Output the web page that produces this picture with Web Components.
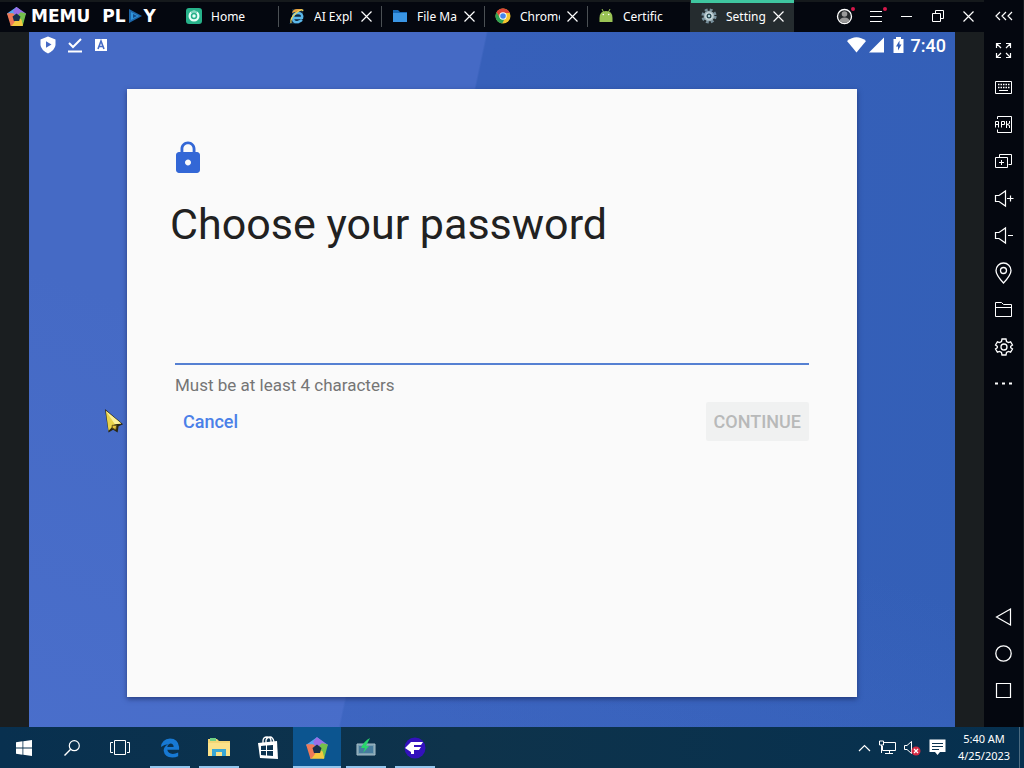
<!DOCTYPE html>
<html lang="en">
<head>
<meta charset="utf-8">
<meta name="viewport" content="width=device-width, initial-scale=1">
<title>MEmu Play</title>
<style>
  body {
    margin: 0;
    min-height: 100vh;
    display: flex;
    flex-direction: column;
    background: #1a1e20;
    font-family: Roboto, "Noto Sans", sans-serif;
    overflow: hidden;
  }
  .emulator {
    flex: 1;
    display: flex;
  }
  .window {
    flex: 1;
    min-width: 0;
    display: flex;
    flex-direction: column;
  }
  android-screen {
    flex: 1;
    margin: 0 29px;
  }
</style>
</head>
<body>
  <div class="emulator">
    <div class="window">
      <title-bar>
        <app-tab icon="home">Home</app-tab>
        <app-tab icon="ie" closable>AI Expl</app-tab>
        <app-tab icon="folder" closable>File Man</app-tab>
        <app-tab icon="chrome" closable>Chrome</app-tab>
        <app-tab icon="android">Certific</app-tab>
        <app-tab icon="cog" closable active>Settings</app-tab>
      </title-bar>
      <android-screen>
        <password-card></password-card>
      </android-screen>
    </div>
    <side-rail></side-rail>
  </div>
  <task-bar></task-bar>
  <mouse-cursor></mouse-cursor>

<script>
const LINE = 'fill="none" stroke="#fff"';

// name: [width, height, markup]
const ICONS = {
  memu: [24, 24, `
    <g stroke-width="1.5" stroke-linejoin="round">
      <path d="M12 2 2 9 6 12 12 13 17 6Z" fill="#58a5f0" stroke="#58a5f0"/>
      <path d="M12 2 22 9 18 13 12 13 9 6Z" fill="#9a6fe8" stroke="#9a6fe8"/>
      <path d="M22 9 18.5 22 13 19 12 13 17 8Z" fill="#74c04c" stroke="#74c04c"/>
      <path d="M18.5 22H6L8 16 12 13 17 16Z" fill="#f3c940" stroke="#f3c940"/>
      <path d="M6 22 2 9 8 9 12 13 9 18Z" fill="#ee7a58" stroke="#ee7a58"/>
    </g>
    <path d="M12 8.500 16.500 12 15 17H9L7.500 12Z" fill="#16304c"/>`],
  play: [14, 14, `<path d="M1 0 14 7 1 14Z" fill="#1d66a8"/><path d="M3 3 11 7 3 11Z" fill="#2f95dc"/><path d="M5 5 9 7 5 9Z" fill="#154a86"/>`],
  home: [16, 16, `<rect width="16" height="16" rx="3" fill="#27b28a"/><circle cx="8" cy="8" r="5.5" fill="#e9fff8"/><circle cx="8" cy="8" r="2.5" fill="none" stroke="#27b28a" stroke-width="1.5"/><path d="M5 4H11" stroke="#27b28a"/>`],
  ie: [16, 16, `<path d="M3 1H15L12 13 10 16H0L3 12Z" fill="#12283a"/><path d="M3 5Q4 1 8 1H14Q11 4 6 4Z" fill="#e9a33f"/><path d="M5 10H13Q14 5 9 5 4 5 4 10 4 15 9 14 12 13 13 12" fill="none" stroke="#5bb8ea" stroke-width="2.4"/><path d="M2 15Q1 10 7 5T14 3" fill="none" stroke="#f0d45a" stroke-width="1.3"/>`],
  folder: [16, 16, `<path d="M1 2H6L8 4H15V14H1Z" fill="#1668b5"/><path d="M1 5H15V14H1Z" fill="#3a95e4"/>`],
  chrome: [16, 16, `<circle cx="8" cy="8" r="7.5" fill="#f4c430"/><path d="M1.5 4.2A7.5 7.5 0 0 1 14.9 5H8L5 9.5Z" fill="#dc4437"/><path d="M1.5 4.2 5 9.8 9.5 11 7.2 15.5A7.5 7.5 0 0 1 1.5 4.2Z" fill="#2ea255"/><circle cx="8" cy="8" r="3.7" fill="#fff"/><circle cx="8" cy="8" r="2.8" fill="#4384ee"/>`],
  android: [16, 16, `<path d="M1.5 14V10Q1.5 3 8 3T14.5 10V14Z" fill="#9ac355"/><path d="M4 1 5.5 4M12 1 10.5 4" stroke="#9ac355"/><circle cx="5.3" cy="6.5" r=".8" fill="#fff"/><circle cx="10.7" cy="6.5" r=".8" fill="#fff"/>`],
  cog: [16, 16, `<circle cx="8" cy="8" r="6.3" fill="none" stroke="#78909c" stroke-width="2.6" stroke-dasharray="2.8 2.15"/><circle cx="8" cy="8" r="4.6" fill="#cfdde0" stroke="#a0b4bc" stroke-width="1.5"/><circle cx="8" cy="8" r="2.5" fill="#25434e"/><circle cx="8" cy="8" r="1.2" fill="#b3d8dc"/>`],
  close: [11, 11, `<path d="M.5.5 10.5 10.5M10.5.5.5 10.5" ${LINE} stroke-width="1.2"/>`],
  user: [20, 20, `<circle cx="9.5" cy="10.5" r="7" fill="#26292c" stroke="#fff" stroke-width="1.3"/><circle cx="9.5" cy="8" r="2.8" fill="#9a9a9a"/><path d="M4.5 15Q5 11.5 9.5 11.5T14.5 15Q9.5 18.5 4.5 15Z" fill="#9a9a9a"/><circle cx="18" cy="3" r="2" fill="#d5174a"/>`],
  menu: [20, 20, `<path d="M4 5.5H16M4 10.5H16M4 15.5H16" ${LINE}/><circle cx="19" cy="3" r="2" fill="#d5174a"/>`],
  minimize: [12, 12, `<path d="M0 6.5H11" ${LINE}/>`],
  restore: [12, 12, `<path d="M3.5 3V.5H11.5V8.5H9M.5 3.5H8.5V11.5H.5Z" ${LINE}/>`],
  collapse: [18, 10, `<path d="M5 1 1 5 5 9M11 1 7 5 11 9M17 1 13 5 17 9" ${LINE} stroke-width="1.2"/>`],
  expand: [17, 17, `<path d="M1.5 6V1.5H6M1.5 1.5 6 6M11 1.5H15.5V6M15.5 1.5 11 6M1.5 11V15.5H6M1.5 15.5 6 11M15.5 11V15.5H11M15.5 15.5 11 11" ${LINE} stroke-width="1.2"/>`],
  keyboard: [17, 13, `<path d="M.5.5H16.5V12.5H.5Z" ${LINE}/><path d="M3 3.5H14.5M3 6.5H14.5" ${LINE} stroke-width="1.5" stroke-dasharray="1.5 1"/><path d="M4 9.5H13" ${LINE}/>`],
  apk: [17, 17, `<path d="M2.5 3V.5H16.5V16.5H2.5V13.5M.5 11.5V5.5H3.5V11.5M.5 8.5H3.5M6.5 11.5V5.5H9.5V8.5H6.5M11.5 5V12M14.5 5V7.5L12 8.5 14.5 9.5V12" ${LINE}/>`],
  copies: [17, 15, `<path d="M4.5 3V.5H16.5V10.5H13.5M.5 3.5H12.5V13.5H.5ZM6.5 6V11M4 8.5H9" ${LINE}/>`],
  volumeUp: [18, 17, `<path d="M.5 5.5H4L10.5 1V16L4 11.5H.5ZM12 8.5H18.5M15.5 5.5V11.5" ${LINE} stroke-width="1.2"/>`],
  volumeDown: [18, 17, `<path d="M.5 5.5H4L10.5 1V16L4 11.5H.5ZM13 8.5H18" ${LINE} stroke-width="1.2"/>`],
  pin: [17, 22, `<path d="M8.5 21Q1 13 1 8.5A7.5 7.5 0 0 1 16 8.5Q16 13 8.5 21Z" ${LINE} stroke-width="1.3"/><circle cx="8.5" cy="8.5" r="3" ${LINE} stroke-width="1.3"/>`],
  files: [17, 15, `<path d="M.5 14.5V.5H6.5L8.5 2.5H16.5V14.5ZM.5 5.5H16.5" ${LINE}/>`],
  settings: [18, 18, `<path d="M7 1H11L11.5 3.5 13.5 4.6 15.6 3.8 17.5 7 15.7 8.3V9.7L17.5 11 15.6 14.2 13.5 13.4 11.5 14.5 11 17H7L6.5 14.5 4.5 13.4 2.4 14.2.5 11 2.3 9.7V8.3L.5 7 2.4 3.8 4.5 4.6 6.5 3.5Z" ${LINE} stroke-width="1.3"/><circle cx="9" cy="9" r="3" ${LINE} stroke-width="1.3"/>`],
  more: [17, 3, `<path d="M0 .5H3V2.5H0ZM7 .5H10V2.5H7ZM14 .5H17V2.5H14Z" fill="#fff"/>`],
  back: [17, 18, `<path d="M15.5 1V17L1.500 9Z" ${LINE} stroke-width="1.2"/>`],
  circle: [17, 17, `<circle cx="8.5" cy="8.5" r="7.7" ${LINE} stroke-width="1.3"/>`],
  square: [15, 15, `<path d="M.5.5H14.5V14.5H.5Z" ${LINE} stroke-width="1.2"/>`],
  shield: [16, 18, `<path d="M8 .5 15.5 3.5V9Q15 14 8 17.5 1 14 .5 9V3.5Z" fill="#fff"/><path d="M6 5.2 11.5 8.5 6 11.8Z" fill="#456ac5"/>`],
  done: [16, 18, `<path d="M2 7 6 11 14 3" ${LINE} stroke-width="2"/><path d="M1 15.5H15" ${LINE} stroke-width="2"/>`],
  letter: [14, 18, `<path d="M1 3H13V15H1Z" fill="#fff"/><path d="M4 13 7 5 10 13M5 10.5H9" fill="none" stroke="#456ac5" stroke-width="1.6"/>`],
  wifi: [19, 16, `<path d="M0 4Q9.5-3.5 19 4L9.5 15.5Z" fill="#fff"/>`],
  signal: [16, 16, `<path d="M0 15.5 15 .5V15.5Z" fill="#fff"/>`],
  battery: [11, 16, `<path d="M3 0H8V2H10.5V16H.5V2H3Z" fill="#fff"/><path d="M6.5 3.5 3 9.5H5V13.5L8.5 7.5H6.5Z" fill="#335fb7"/>`],
  lock: [24, 24, `<path d="M18 8h-1V6c0-2.760-2.240-5-5-5S7 3.240 7 6v2H6c-1.100 0-2 .9-2 2v10c0 1.100.9 2 2 2h12c1.100 0 2-.9 2-2V10c0-1.100-.9-2-2-2zm-6 9c-1.100 0-2-.9-2-2s.9-2 2-2 2 .9 2 2-.9 2-2 2zm3.100-9H8.900V6c0-1.710 1.390-3.100 3.100-3.100s3.100 1.390 3.100 3.100v2z" fill="#3367d6"/>`],
  windows: [16, 16, `<path d="M0 2.2 6.5 1.3V7.6H0ZM7.3 1.2 16 0V7.6H7.3ZM0 8.4H6.5V14.7L0 13.8ZM7.3 8.4H16V16L7.3 14.8Z" fill="#fff"/>`],
  search: [16, 16, `<circle cx="10.3" cy="5.7" r="5" ${LINE} stroke-width="1.2"/><path d="M6.7 9.3.5 15.5" ${LINE} stroke-width="1.4"/>`],
  taskView: [20, 15, `<path d="M4.5.5H15.5V14.5H4.5ZM3 2.5H.5V12.5H3M17 2.5H19.5V12.5H17" ${LINE}/>`],
  edge: [22, 22, `<path d="M1 10Q2 1 11 .5 20 .5 21 10V13H8Q9 17.5 14 17.5 17 17.5 20 16V20Q17 21.5 13.5 21.5 5 21 4 14 4 9.5 9 7 5 7 1 10ZM8 10H15Q15 6 11.5 6 8.5 6.5 8 10Z" fill="#1779d4"/>`],
  explorer: [22, 19, `<path d="M0 1H9L11 3H22V18H0Z" fill="#f3d675"/><path d="M2 0H8V3H2Z" fill="#6fcf85"/><path d="M0 5H22V18H0Z" fill="#fbe28a"/><path d="M4 18V11H18V18H14V14H8V18Z" fill="#38a7d5"/>`],
  store: [22, 24, `<path d="M6 7V5Q6 1 10 1T14 5V7M9 7V4Q10 1 13 1T17 6" ${LINE} stroke-width="1.3"/><path d="M1 7 20 5 21 23 3 22Z" fill="#fff"/><path d="M4 10 9 9.5V14H4ZM10 9.4 16 9V14H10ZM4 15H9V19.5L4 19ZM10 15H16V20L10 19.5Z" fill="#0b3350"/>`],
  monitor: [20, 20, `<path d="M1 6H19V17H1Z" fill="#789eb0" stroke="#a8bec8"/><path d="M3 8H17V15H3Z" fill="#477c9e"/><path d="M14 0Q8 3 5 10H9L7 15 13 8H10Z" fill="#28d66c"/>`],
  purple: [22, 22, `<circle cx="11" cy="11" r="10.5" fill="#3311bd"/><path d="M1 11 7 5H19L17 8H10V10H17L15 13H10V17H7V15Z" fill="#fff"/>`],
  chevron: [13, 8, `<path d="M1 7 6.5 1.5 12 7" ${LINE} stroke-width="1.2"/>`],
  network: [17, 15, `<path d="M4 2.5H16.5V10.5H3.5V6M10.5 10V13.5M6 13.5H14M.5 1H4.5V5H.5ZM2.5 5V13" ${LINE}/>`],
  muted: [17, 16, `<path d="M.5 5.5H3L7.5 1.5V13.5L3 9.5H.5Z" ${LINE}/><circle cx="12" cy="11" r="4.5" fill="#d42a43"/><path d="M10 9 14 13M14 9 10 13" ${LINE} stroke-width="1.2"/>`],
  message: [17, 17, `<path d="M.5.5H16.5V13H11L8.5 16 6 13H.5Z" fill="#fff"/><path d="M3 4.5H14M3 7.5H14M3 10.5H10" stroke="#0b3350"/>`],
  cursor: [22, 30, `<path d="M1 1 21 18 16 20 15 27 10 24 5 27Z" fill="#2a2713"/><path d="M2 3 19 17 12 18 5 25Z" fill="#e9d34b"/><path d="M2 3 12 18 19 17Z" fill="#fbf19a"/><path d="M9 19 14 19 13 24 9 22Z" fill="#e7c63d" stroke="#574815"/>`]
};

class UiIcon extends HTMLElement {
  constructor() {
    super();
    this.attachShadow({ mode: "open" });
  }

  connectedCallback() {
    const [w, h, markup] = ICONS[this.getAttribute("name")];
    const width = this.getAttribute("width") || w;
    const height = width * h / w;
    this.shadowRoot.innerHTML = `
      <style>
        :host { display: block; flex: none; }
        svg { display: block; overflow: visible; }
      </style>
      <svg width="${width}" height="${height}" viewBox="0 0 ${w} ${h}" aria-hidden="true">${markup}</svg>
    `;
  }
}

class AppTab extends HTMLElement {
  constructor() {
    super();
    this.attachShadow({ mode: "open" });
  }

  connectedCallback() {
    this.shadowRoot.innerHTML = `
      <style>
        :host {
          box-sizing: border-box;
          width: 103px;
          height: 32px;
          display: flex;
          align-items: center;
          padding-left: 10px;
          background: linear-gradient(#4b5054, #4b5054) right 6px / 1px 21px no-repeat;
        }
        :host([active]) {
          background: #252c2f;
          box-shadow: inset 0 3px #3fc6a0, -1px 0 #252c2f;
        }
        button {
          border: 0;
          padding: 0;
          background: none;
          color: #fff;
          font: 12px/18px "Noto Sans", sans-serif;
        }
        .tab {
          display: flex;
          align-items: center;
          gap: 9px;
          text-align: left;
        }
        .label {
          width: 40px;
          padding-top: 2px;
          overflow: hidden;
          white-space: nowrap;
        }
        .close { margin-left: 7px; }
      </style>
      <button class="tab">
        <ui-icon name="${this.getAttribute("icon")}"></ui-icon>
        <span class="label"><slot></slot></span>
      </button>
      ${this.hasAttribute("closable") ? `<button class="close" aria-label="Close tab"><ui-icon name="close"></ui-icon></button>` : ""}
    `;
  }
}

class TitleBar extends HTMLElement {
  constructor() {
    super();
    const controls = ["user", "menu", "minimize", "restore", "close"];
    this.attachShadow({ mode: "open" }).innerHTML = `
      <style>
        :host {
          display: flex;
          height: 32px;
          background: #04070f;
          box-shadow: inset 0 2px #15191c;
        }
        .brand {
          box-sizing: border-box;
          width: 176px;
          display: flex;
          align-items: center;
          padding-left: 6px;
          color: #fff;
          font: bold 17px/20px "DejaVu Sans", sans-serif;
        }
        .brand span { margin-left: 4px; }
        .brand .second {
          display: flex;
          align-items: center;
          gap: 2px;
          margin-left: 12px;
        }
        .tabs { display: flex; }
        .controls {
          display: flex;
          margin-left: auto;
        }
        .controls button {
          width: 31px;
          padding: 0;
          border: 0;
          background: none;
          display: grid;
          place-items: center;
        }
      </style>
      <div class="brand">
        <ui-icon name="memu" width="21"></ui-icon>
        <span>MEMU</span>
        <div class="second">PL<ui-icon name="play"></ui-icon>Y</div>
      </div>
      <div class="tabs"><slot></slot></div>
      <div class="controls">
        ${controls.map(name => `<button aria-label="${name}"><ui-icon name="${name}"></ui-icon></button>`).join("")}
      </div>
    `;
  }
}

class SideRail extends HTMLElement {
  constructor() {
    super();
    const tools = ["expand", "keyboard", "apk", "copies", "volumeUp", "volumeDown", "pin", "files", "settings", "more"];
    const nav = ["back", "circle", "square"];
    const button = name => `<button aria-label="${name}"><ui-icon name="${name}"></ui-icon></button>`;
    this.attachShadow({ mode: "open" }).innerHTML = `
      <style>
        :host {
          box-sizing: border-box;
          width: 40px;
          display: flex;
          flex-direction: column;
          padding-bottom: 18px;
          border-right: 1px solid #14191e;
          background: #04070f;
        }
        button {
          height: 37px;
          padding: 0;
          border: 0;
          background: none;
          display: grid;
          place-items: center;
        }
        .collapse { height: 32px; }
        .space { flex: 1; }
      </style>
      <button class="collapse" aria-label="collapse"><ui-icon name="collapse"></ui-icon></button>
      ${tools.map(button).join("")}
      <div class="space"></div>
      ${nav.map(button).join("")}
    `;
  }
}

class AndroidScreen extends HTMLElement {
  constructor() {
    super();
    this.attachShadow({ mode: "open" }).innerHTML = `
      <style>
        :host {
          display: flex;
          flex-direction: column;
          background:
            linear-gradient(200deg, transparent 55%, rgba(84, 120, 216, 0.3)),
            linear-gradient(102deg, #456ac5 calc(50% - 78px), #3760ba calc(50% - 76px), #335fb7);
        }
        .status {
          display: flex;
          align-items: center;
          height: 26px;
          padding: 0 9px 0 11px;
          color: #fff;
          font-size: 18px;
          font-weight: 500;
        }
        .notices {
          display: flex;
          gap: 11px;
        }
        .system {
          display: flex;
          align-items: center;
          gap: 3px;
          margin-left: auto;
        }
        .system time { margin-left: 4px; }
        .battery { margin-left: 5px; }
        .content {
          flex: 1;
          display: flex;
          padding: 31px 98px 30px;
        }
        ::slotted(*) { flex: 1; }
      </style>
      <div class="status">
        <div class="notices">
          <ui-icon name="shield"></ui-icon>
          <ui-icon name="done"></ui-icon>
          <ui-icon name="letter"></ui-icon>
        </div>
        <div class="system">
          <ui-icon name="wifi"></ui-icon>
          <ui-icon name="signal"></ui-icon>
          <ui-icon class="battery" name="battery"></ui-icon>
          <time>7:40</time>
        </div>
      </div>
      <div class="content"><slot></slot></div>
    `;
  }
}

class PasswordCard extends HTMLElement {
  constructor() {
    super();
    this.attachShadow({ mode: "open" }).innerHTML = `
      <style>
        :host {
          display: block;
          padding: 51px 43px 0;
          background: #fafafa;
          box-shadow: 0 2px 5px rgba(20, 30, 80, 0.6);
        }
        h1 {
          margin: 22px 0 0;
          color: #212121;
          font-size: 43px;
          font-weight: 400;
          line-height: 52px;
        }
        form { margin: 65px 5px 0; }
        input {
          display: block;
          box-sizing: border-box;
          width: 100%;
          height: 50px;
          padding: 0;
          border: 0;
          border-bottom: 2px solid #5580d2;
          outline: 0;
          background: none;
          font-size: 24px;
        }
        p {
          margin: 10px 0 7px;
          color: #757575;
          font-size: 17px;
          line-height: 20px;
        }
        .actions {
          display: flex;
          justify-content: space-between;
        }
        button {
          height: 39px;
          padding: 0 8px;
          border: 0;
          border-radius: 2px;
          background: none;
          color: #4a80e8;
          font: 500 18px/20px Roboto, sans-serif;
        }
        button:disabled {
          background: #f0f1f1;
          color: #b8b9b9;
        }
      </style>
      <ui-icon name="lock" width="36"></ui-icon>
      <h1><label for="password">Choose your password</label></h1>
      <form>
        <input id="password" type="password" aria-describedby="hint">
        <p id="hint">Must be at least 4 characters</p>
        <div class="actions">
          <button type="button">Cancel</button>
          <button type="submit" disabled>CONTINUE</button>
        </div>
      </form>
    `;
  }
}

class TaskBar extends HTMLElement {
  constructor() {
    super();
    this.attachShadow({ mode: "open" }).innerHTML = `
      <style>
        :host {
          display: flex;
          height: 41px;
          background: linear-gradient(90deg, #08304f, #0e334b 45%, #06304f);
          color: #fff;
        }
        button {
          box-sizing: border-box;
          width: 48px;
          padding: 0;
          border: 0;
          background: none;
          display: grid;
          place-items: center;
        }
        .system, .apps, .tray { display: flex; }
        .apps {
          gap: 1px;
          margin-left: 2px;
        }
        .open { background: linear-gradient(#93c6ee, #93c6ee) center bottom / 40px 2px no-repeat; }
        .active {
          background: #0c5590;
          box-shadow: inset 0 -2px #93c6ee;
        }
        .tray {
          align-items: center;
          gap: 8px;
          margin-left: auto;
        }
        .tray button { width: auto; }
        .clock {
          width: 60px;
          margin-right: 5px;
          padding-bottom: 2px;
          font: 11px/17px "Noto Sans", sans-serif;
          text-align: center;
        }
        .desktop {
          align-self: stretch;
          width: 4px;
          margin-left: -8px;
          border-left: 1px solid #4c6b80;
        }
      </style>
      <div class="system">
        <button aria-label="Start"><ui-icon name="windows"></ui-icon></button>
        <button aria-label="Search"><ui-icon name="search"></ui-icon></button>
        <button aria-label="Task View"><ui-icon name="taskView"></ui-icon></button>
      </div>
      <div class="apps">
        <button class="open" aria-label="Edge"><ui-icon name="edge" width="20"></ui-icon></button>
        <button class="open" aria-label="File Explorer"><ui-icon name="explorer"></ui-icon></button>
        <button aria-label="Store"><ui-icon name="store"></ui-icon></button>
        <button class="active" aria-label="MEmu"><ui-icon name="memu"></ui-icon></button>
        <button class="open" aria-label="Monitor"><ui-icon name="monitor"></ui-icon></button>
        <button class="open" aria-label="Capture"><ui-icon name="purple"></ui-icon></button>
      </div>
      <div class="tray">
        <button aria-label="Hidden icons"><ui-icon name="chevron"></ui-icon></button>
        <button aria-label="Network"><ui-icon name="network"></ui-icon></button>
        <button aria-label="Volume"><ui-icon name="muted"></ui-icon></button>
        <button aria-label="Notifications"><ui-icon name="message"></ui-icon></button>
        <div class="clock">5:40 AM<br>4/25/2023</div>
        <div class="desktop"></div>
      </div>
    `;
  }
}

class MouseCursor extends HTMLElement {
  constructor() {
    super();
    this.attachShadow({ mode: "open" }).innerHTML = `
      <style>
        :host {
          position: absolute;
          left: 104px;
          top: 408px;
          pointer-events: none;
        }
      </style>
      <ui-icon name="cursor" width="20"></ui-icon>
    `;
  }
}

customElements.define("ui-icon", UiIcon);
customElements.define("app-tab", AppTab);
customElements.define("title-bar", TitleBar);
customElements.define("side-rail", SideRail);
customElements.define("android-screen", AndroidScreen);
customElements.define("password-card", PasswordCard);
customElements.define("task-bar", TaskBar);
customElements.define("mouse-cursor", MouseCursor);
</script>
</body>
</html>
